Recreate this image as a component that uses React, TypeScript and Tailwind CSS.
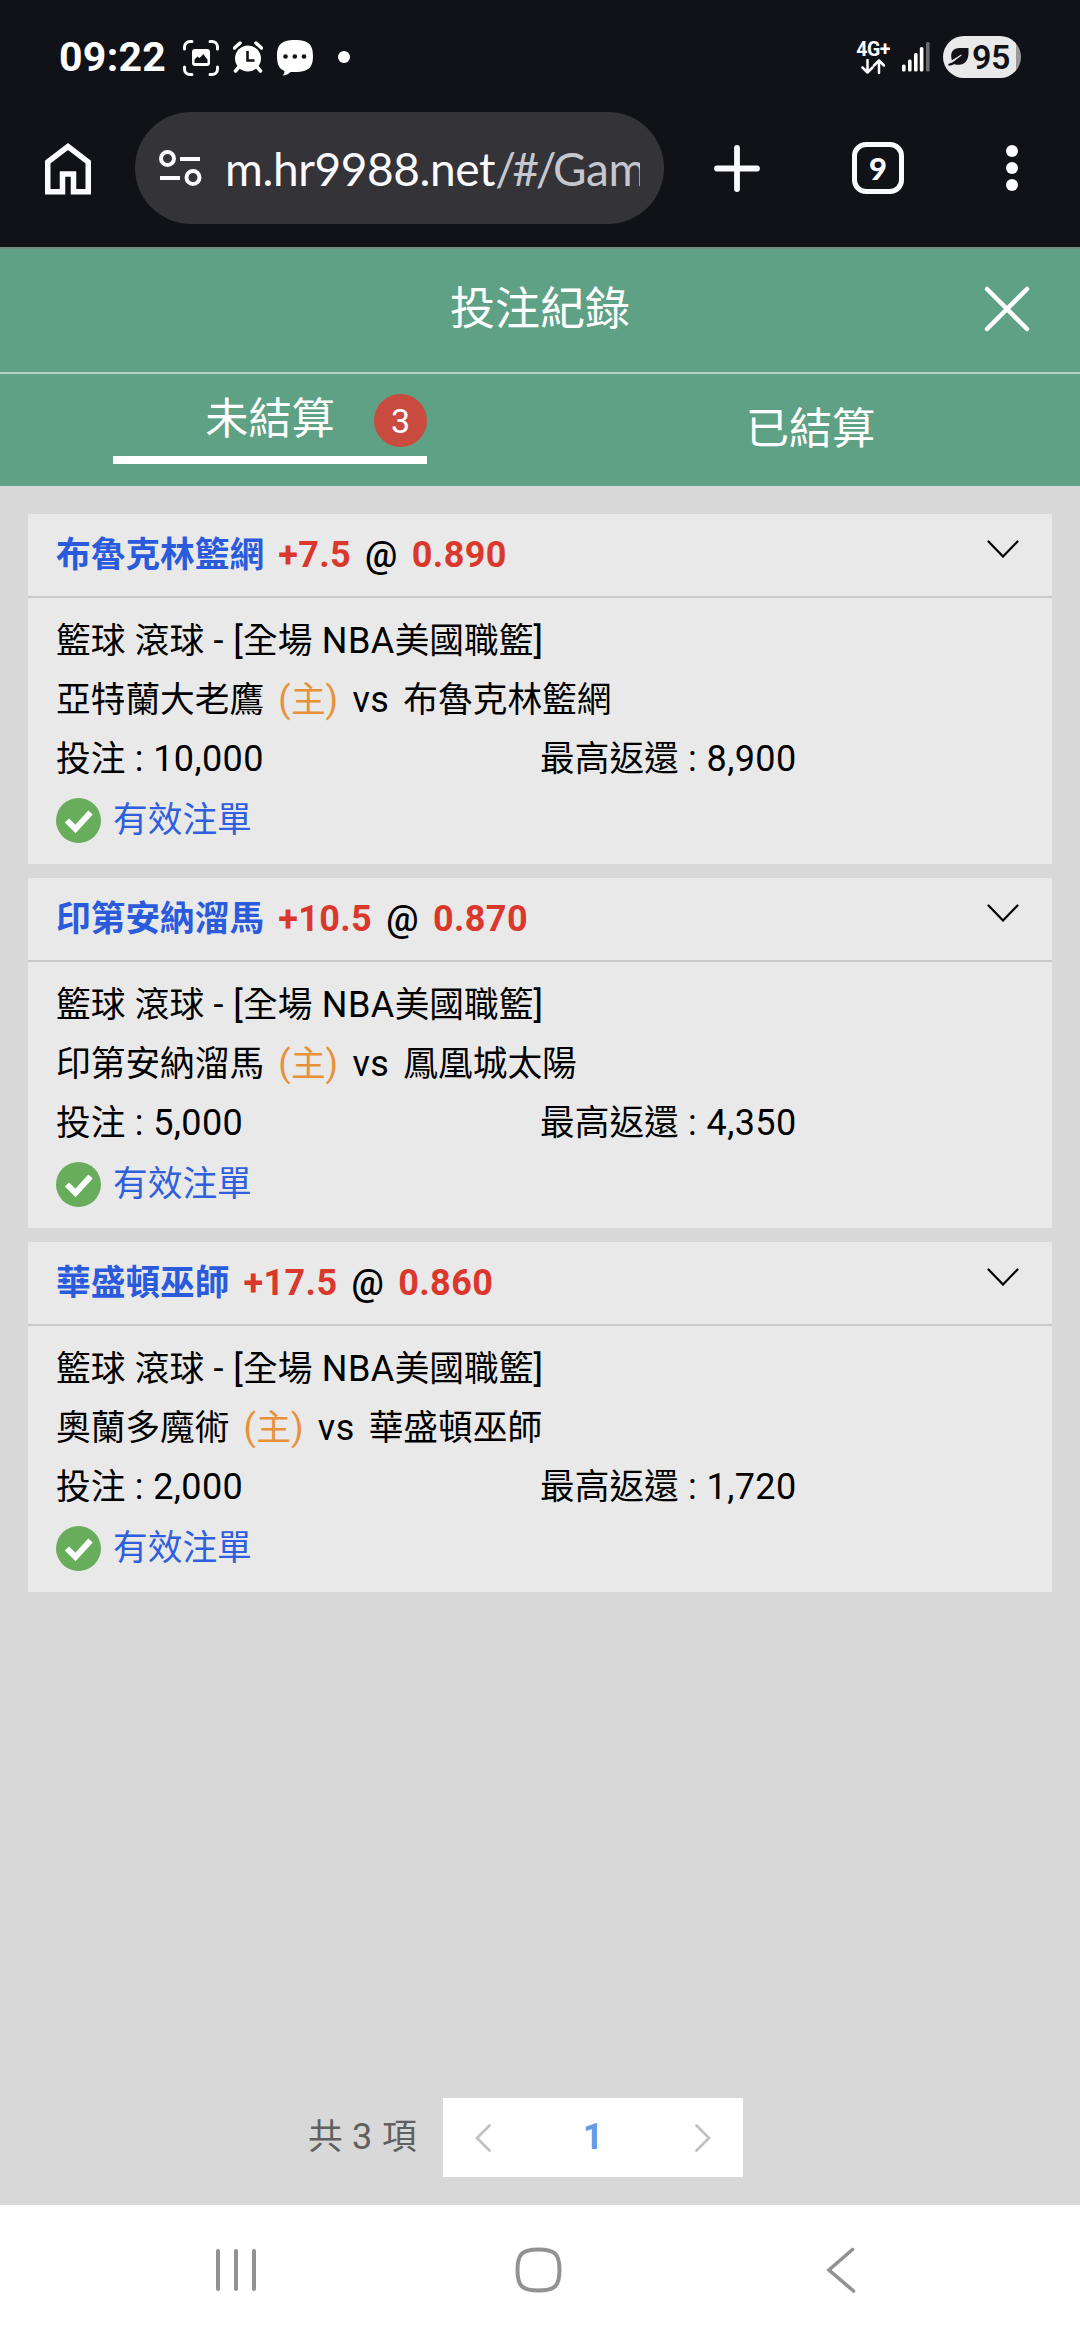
import type { ReactNode } from "react"

interface IBet {
    team: string
    handicap: string
    odds: string
    home: string
    away: string
    stake: string
    payout: string
}

const bets: IBet[] = [
    { team: "布魯克林籃網", handicap: "+7.5", odds: "0.890", home: "亞特蘭大老鷹", away: "布魯克林籃網", stake: "10,000", payout: "8,900" },
    { team: "印第安納溜馬", handicap: "+10.5", odds: "0.870", home: "印第安納溜馬", away: "鳳凰城太陽", stake: "5,000", payout: "4,350" },
    { team: "華盛頓巫師", handicap: "+17.5", odds: "0.860", home: "奧蘭多魔術", away: "華盛頓巫師", stake: "2,000", payout: "1,720" },
]

// latin letters and digits run a little larger than the Chinese text
const Latin = ({ children }: { children: ReactNode }) => {
    return <span className="text-[36px] leading-none tracking-[0.4px] whitespace-pre">{children}</span>
}

const StatusBar = () => {
    return (
        <div className="flex h-[112px] items-start pl-[59px] pr-[59px] pt-9 text-white">
            <span className="w-[124px] text-[41px] leading-[42px] font-bold tracking-[0.3px] whitespace-nowrap">09:22</span>

            <svg className="mt-1 h-[36px] w-[36px]" viewBox="0 0 36 36" fill="none">
                <path d="M1.500 9V7a5.500 5.500 0 0 1 5.500-5.500h2M27 1.500h2A5.500 5.500 0 0 1 34.500 7v2M34.500 27v2a5.500 5.500 0 0 1-5.500 5.500h-2M9 34.500H7A5.500 5.500 0 0 1 1.500 29v-2" stroke="currentColor" strokeWidth="3" strokeLinecap="round" />
                <rect x="9" y="9" width="18" height="17" rx="3" fill="currentColor" />
                <path d="M11.500 23v-3.500l3-3 2 1.500 4-4 1.500 2.500 2.500 3V23z" fill="#111217" />
            </svg>
            <svg className="ml-[14px] mt-[5px] h-[32px] w-[30px]" viewBox="0 0 30 32" fill="none">
                <circle cx="15" cy="17.500" r="13" fill="currentColor" />
                <path d="M1.500 7 7 2M28.500 7 23 2" stroke="currentColor" strokeWidth="3.500" strokeLinecap="round" />
                <path d="m6 26-3.500 4M24 26l3.500 4" stroke="currentColor" strokeWidth="3.500" strokeLinecap="round" />
                <path d="M14.500 10v9.500h7" stroke="#111217" strokeWidth="2.600" />
            </svg>
            <svg className="ml-[13px] mt-[3px] h-[37px] w-[38px]" viewBox="0 0 38 37">
                <path d="M19 1C5 1 1 6 1 17c0 8 2 13 7.500 15 0 2-.5 3-2 4.500 3.500 0 6-1.500 8-3.500H19c14 0 18-5 18-16S33 1 19 1z" fill="currentColor" />
                <circle cx="9.500" cy="17.500" r="2.300" fill="#111217" />
                <circle cx="18.800" cy="17.500" r="2.300" fill="#111217" />
                <circle cx="28" cy="17.500" r="2.300" fill="#111217" />
            </svg>
            <span className="ml-[24px] mt-[15px] h-3 w-3 rounded-full bg-white" />

            <div className="ml-auto flex items-start">
                <div className="mt-1 flex w-[34px] flex-col items-center">
                    <span className="text-[19.500px] leading-[20px] font-bold tracking-[-0.5px]">4G+</span>
                    <svg className="-mt-px h-[15px] w-[24px]" viewBox="0 0 24 15" fill="none" stroke="currentColor" strokeWidth="2.500" strokeLinecap="round" strokeLinejoin="round">
                        <path d="M6.500 1v12.500M1.500 8.500l5 5 5-5M18 14V1.500M13 6.500l5-5 5 5" />
                    </svg>
                </div>
                <svg className="ml-[12px] mt-[6px] h-[30px] w-[28px]" viewBox="0 0 28 30" fill="currentColor">
                    <rect x="0" y="22.500" width="3.600" height="7" rx="1.500" />
                    <rect x="6" y="17.500" width="3.600" height="12" rx="1.500" />
                    <rect x="12" y="11" width="3.600" height="18.500" rx="1.500" />
                    <rect x="17.800" y="5" width="3.600" height="24.500" rx="1.500" />
                    <rect x="24" y="0" width="3.600" height="29.500" rx="1.500" fill="#6c6c70" />
                </svg>
                <div className="ml-[13px] flex h-[42px] w-[78px] items-center overflow-hidden rounded-full bg-linear-to-r from-[#e9e9e9] from-94% to-[#9a9a9a] to-94% pl-[5px] text-[#111217]">
                    <svg className="h-[20px] w-[21px]" viewBox="0 0 22 21" fill="none">
                        <path d="M21.500 1H12C6 1 2.500 5 3.500 11.500L4 14l9-5-8 8c2 1.500 5 2 8 1.500 6-1 8-6 8.500-11z" fill="currentColor" />
                        <path d="M1.500 18.500C6 18 10 14 13.500 9.500" stroke="currentColor" strokeWidth="2.500" strokeLinecap="round" />
                        <path d="M5.500 14.500 14 8.500" stroke="#e9e9e9" strokeWidth="1.300" />
                    </svg>
                    <span className="ml-[3px] text-[34px] leading-[42px] font-semibold tracking-[-0.5px]">95</span>
                </div>
            </div>
        </div>
    )
}

const BrowserBar = () => {
    return (
        <div className="flex h-[135px] items-start text-[#fafaff]">
            <svg className="ml-[45px] mt-[31px] h-[52px] w-[46px]" viewBox="0 0 46 52" fill="none" stroke="currentColor" strokeWidth="5.500">
                <path d="M2.750 19 23 3.500 43.250 19v29.700H28.500V31H17.500v17.700H2.750z" />
            </svg>

            <div className="ml-[44px] flex h-[112px] w-[529px] items-center rounded-full bg-[#333338] pl-6">
                <svg className="h-[38px] w-[43px]" viewBox="0 0 43 38" fill="none" stroke="currentColor" strokeWidth="4">
                    <circle cx="8.500" cy="9.500" r="6.500" />
                    <path d="M21 10h20M1 29h20" />
                    <circle cx="34" cy="28.500" r="6.500" />
                </svg>
                <span className="ml-[23px] w-[415px] overflow-hidden text-[46px] tracking-[-0.4px] whitespace-nowrap font-['Lato',sans-serif]">
                    m.hr9988.net<span className="tracking-[-3.500px] text-[#c6c6ce]">/#/</span><span className="text-[#c6c6ce]">Gam</span>
                </span>
            </div>

            <svg className="ml-[50px] mt-[33px] h-[47px] w-[46px]" viewBox="0 0 46 47" fill="none" stroke="currentColor" strokeWidth="5.800" strokeLinecap="round">
                <path d="M23 3v41M3 23.500h40" />
            </svg>
            <div className="ml-[92px] mt-[30px] flex h-[52px] w-[52px] items-center justify-center rounded-[14px] border-[5.500px] border-[#fafaff] text-[31px] leading-none font-black font-['Lato',sans-serif]">
                9
            </div>
            <div className="ml-[102px] mt-[33px] flex flex-col gap-[5px]">
                <span className="h-3 w-3 rounded-full bg-[#fafaff]" />
                <span className="h-3 w-3 rounded-full bg-[#fafaff]" />
                <span className="h-3 w-3 rounded-full bg-[#fafaff]" />
            </div>
        </div>
    )
}

const PageHeader = () => {
    return (
        <header className="border-t-2 border-[#768a82] bg-[#5ea184] text-white">
            <div className="flex h-[125px] items-center border-b-2 border-[#b4d3c5] pb-[2px] pl-[96px] pr-[50px]">
                <h1 className="flex-1 text-center text-[45px] leading-[60px]">投注紀錄</h1>
                <svg className="-mt-[2px] h-[46px] w-[46px]" viewBox="0 0 46 46" fill="none" stroke="currentColor" strokeWidth="4.500" strokeLinecap="round">
                    <path d="m3 3 40 40M43 3 3 43" />
                </svg>
            </div>

            <div className="grid h-[112px] grid-cols-2">
                <div className="flex justify-center">
                    <div className="relative flex h-[90px] w-[314px] items-center justify-center border-b-8 border-white pt-[10px]">
                        <span className="text-[43.200px] leading-[60px]">未結算</span>
                        <span className="absolute top-[20px] right-0 flex h-[53px] w-[53px] items-center justify-center rounded-full bg-[#c94b40] text-[34px] leading-none">3</span>
                    </div>
                </div>
                <div className="flex items-center justify-center pb-px pl-px">
                    <span className="text-[43.200px] leading-[60px]">已結算</span>
                </div>
            </div>
        </header>
    )
}

const BetCard = ({ team, handicap, odds, home, away, stake, payout }: IBet) => {
    return (
        <article className="h-[350px] bg-[#e9e9e9] text-[34.700px] text-black">
            <div className="flex h-[84px] items-start justify-between border-b-2 border-[#c9c9c9] pl-7 pr-[33px]">
                <div className="flex items-baseline gap-[14px] pt-4 leading-[50px] font-bold text-[#da382d]">
                    <span className="text-[#2b5bdd]">{team}</span>
                    <Latin>{handicap}</Latin>
                    <span className="font-medium text-black"><Latin>@</Latin></span>
                    <Latin>{odds}</Latin>
                </div>
                <svg className="mt-[26px] h-[18px] w-[32px]" viewBox="0 0 32 18" fill="none" stroke="currentColor" strokeWidth="2.200" strokeLinecap="round">
                    <path d="m1.500 1.500 14.500 15 14.500-15" />
                </svg>
            </div>

            <div className="px-7 pt-[14px] leading-[59px]">
                <p>籃球<Latin> </Latin>滾球<Latin> - [</Latin>全場<Latin> NBA</Latin>美國職籃<Latin>]</Latin></p>
                <p className="flex items-baseline gap-[14px]">
                    <span>{home}</span>
                    <span className="text-[#e8913a]"><Latin>(</Latin>主<Latin>)</Latin></span>
                    <Latin>vs</Latin>
                    <span>{away}</span>
                </p>
                <div className="grid grid-cols-2">
                    <span>投注<Latin> : {stake}</Latin></span>
                    <span>最高返還<Latin> : {payout}</Latin></span>
                </div>
                <div className="flex items-center gap-[12px] pt-px text-[#2f5fdd]">
                    <svg className="h-[45px] w-[45px]" viewBox="0 0 45 45" fill="none">
                        <circle cx="22.500" cy="22.500" r="22.500" fill="#68ad5b" />
                        <path d="m11 22.500 8.500 8.500 15-16.500" stroke="#fff" strokeWidth="6" />
                    </svg>
                    <span className="pt-px">有效注單</span>
                </div>
            </div>
        </article>
    )
}

const Pagination = () => {
    return (
        <div className="mt-auto mb-7 flex h-[79px] items-center pl-[308px]">
            <span className="w-[135px] text-[34.700px] text-[#606060] whitespace-nowrap">共<Latin> 3 </Latin>項</span>
            <div className="flex h-[79px] w-[300px] items-center justify-between bg-white px-8 text-[#c0c1c7]">
                <svg className="h-[28px] w-[16px]" viewBox="0 0 16 28" fill="none" stroke="currentColor" strokeWidth="2.800" strokeLinecap="round">
                    <path d="M14.500 1.500 2 14l12.500 12.500" />
                </svg>
                <span className="pb-[2px] text-[36px] font-bold text-[#659ae8]">1</span>
                <svg className="h-[28px] w-[16px]" viewBox="0 0 16 28" fill="none" stroke="currentColor" strokeWidth="2.800" strokeLinecap="round">
                    <path d="M1.500 1.500 14 14 1.500 26.500" />
                </svg>
            </div>
        </div>
    )
}

const NavBar = () => {
    return (
        <nav className="flex h-[135px] items-start bg-white pt-[42px] text-[#929292]">
            <div className="ml-[216px] mt-[2px] flex gap-[14px]">
                <span className="h-[42px] w-1 rounded-full bg-[#929292]" />
                <span className="h-[42px] w-1 rounded-full bg-[#929292]" />
                <span className="h-[42px] w-1 rounded-full bg-[#929292]" />
            </div>
            <svg className="ml-[259px] h-[46px] w-[47px]" viewBox="0 0 47 46" fill="none" stroke="currentColor" strokeWidth="4">
                <path d="M23.500 2.500C7 2.500 2.500 7 2.500 23S7 43.500 23.500 43.500 44.500 39 44.500 23 40 2.500 23.500 2.500z" />
            </svg>
            <svg className="ml-[264px] h-[46px] w-[30px]" viewBox="0 0 30 46" fill="none" stroke="currentColor" strokeWidth="3.600" strokeLinecap="round">
                <path d="M26.500 2.500 3 23l24.500 21" />
            </svg>
        </nav>
    )
}

export default function App() {
    return (
        <div lang="zh-Hant" className="flex h-[2340px] w-[1080px] flex-col overflow-hidden bg-[#d8d8d8] font-['Roboto','Noto_Sans_CJK_TC',sans-serif]">
            <div className="bg-[#111217]">
                <StatusBar />
                <BrowserBar />
            </div>
            <PageHeader />
            <main className="flex flex-1 flex-col">
                <div className="flex flex-col gap-[14px] px-7 pt-7">
                    {bets.map((bet) => (
                        <BetCard key={bet.team} {...bet} />
                    ))}
                </div>
                <Pagination />
            </main>
            <NavBar />
        </div>
    )
}
